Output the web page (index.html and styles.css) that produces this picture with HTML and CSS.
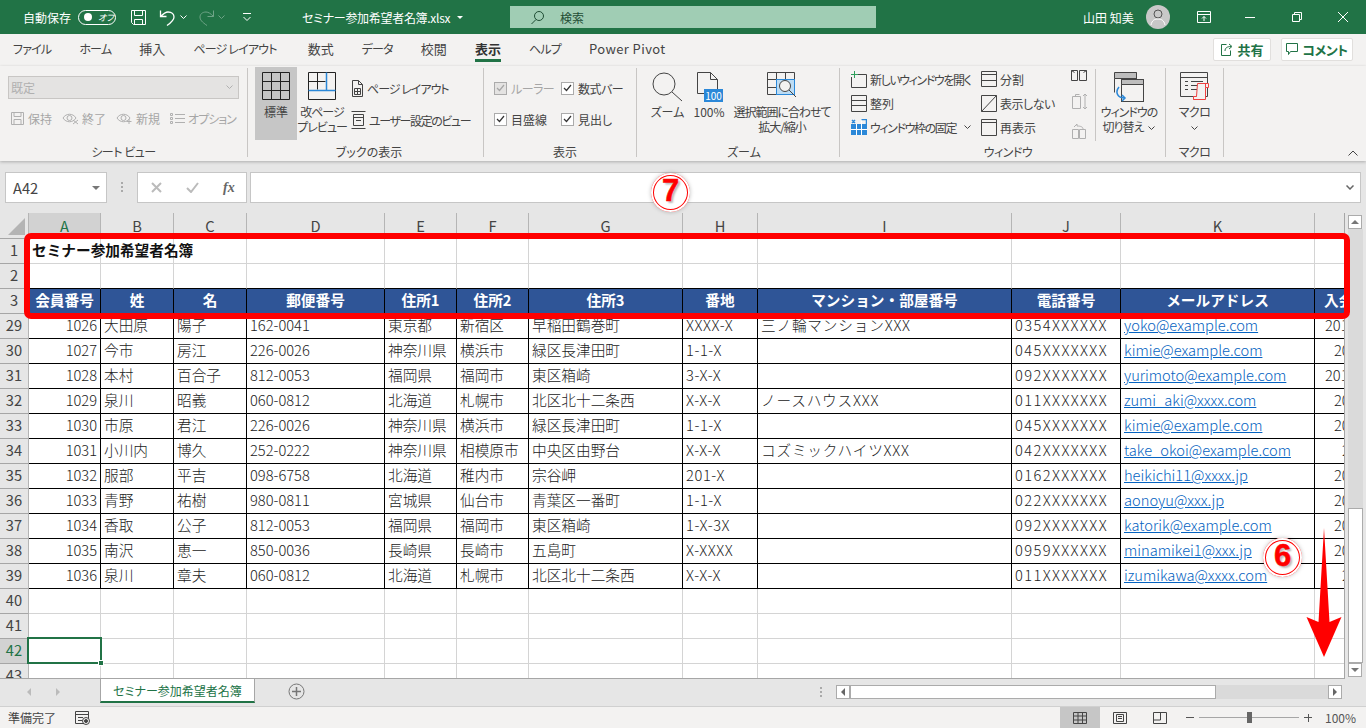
FILE: index.html
```html
<!DOCTYPE html>
<html lang="ja">
<head>
    <meta charset="utf-8">
    <title>セミナー参加希望者名簿.xlsx</title>
    <link rel="stylesheet" href="styles.css">
</head>
<body>
<div class="app">
    <!-- タイトルバー -->
    <header class="titlebar">
        <span class="autosave">自動保存</span>
        <span class="toggle"><i></i><em>オフ</em></span>
        <svg class="qa save" width="17" height="17" viewBox="0 0 17 17"><path d="M1.500 1.500h14v14h-12l-2-2zM4.500 1.500v5h8v-5M4.500 15.500v-5h8v5"/></svg>
        <svg class="qa undo" width="17" height="17" viewBox="0 0 17 17"><path d="M1.500 1.500v6h6M1.500 7.500c3-3 5-4.500 7.500-4.500 4 0 6 2.500 6 5 0 3-2 5-7 8.500"/></svg>
        <svg class="qa-chev" width="7" height="5" viewBox="0 0 7 5"><path d="M.5.500l3 3 3-3"/></svg>
        <svg class="qa redo" width="17" height="17" viewBox="0 0 17 17"><path d="M15.500 1.500v6h-6M15.500 7.500c-3-3-5-4.500-7.500-4.500-4 0-6 2.500-6 5 0 3 2 5 7 8.500"/></svg>
        <svg class="qa-chev dim" width="7" height="5" viewBox="0 0 7 5"><path d="M.5.500l3 3 3-3"/></svg>
        <svg class="qa-more" width="8" height="8" viewBox="0 0 8 8"><path d="M0 .5h8M.5 4l3.500 3.500L7.500 4"/></svg>
        <span class="doc-name">セミナー参加希望者名簿.xlsx</span>
        <span class="doc-caret"></span>
        <div class="search">
            <svg width="15" height="15" viewBox="0 0 15 15"><circle cx="9" cy="6" r="4.500"/><path d="M6 9.500L1.500 14"/></svg>
            <span>検索</span>
        </div>
        <span class="user">山田 知美</span>
        <svg class="avatar" width="24" height="24" viewBox="0 0 24 24"><circle cx="12" cy="12" r="12" fill="#c8c8c8"/><circle cx="12" cy="9" r="4" fill="none" stroke="#555"/><path d="M5 20c1-5 4-6 7-6s6 1 7 6" fill="none" stroke="#555"/></svg>
        <svg class="win w1" width="14" height="14" viewBox="0 0 14 14"><path d="M.5 1.500h13v11H.5zM.5 4.500h13M7 11V6.500M5 8.500l2-2 2 2"/></svg>
        <svg class="win w2" width="12" height="12" viewBox="0 0 12 12"><path d="M1 6.500h10"/></svg>
        <svg class="win w3" width="12" height="12" viewBox="0 0 12 12"><path d="M1.500 3.500h7v7h-7zM3.500 3.500v-2h7v7h-2"/></svg>
        <svg class="win w4" width="12" height="12" viewBox="0 0 12 12"><path d="M1 1l10 10M11 1L1 11"/></svg>
    </header>

    <!-- リボンのタブ -->
    <nav class="tabs">
        <span class="kana">ファイル</span>
        <span class="kana">ホーム</span>
        <span>挿入</span>
        <span class="kana page-tab">ページ レイアウト</span>
        <span>数式</span>
        <span class="kana">データ</span>
        <span>校閲</span>
        <span class="active">表示</span>
        <span class="kana">ヘルプ</span>
        <span class="latin">Power Pivot</span>
        <div class="share-btns">
            <button class="share"><svg width="13" height="14" viewBox="0 0 13 14"><path d="M6.500 2.500H1.500v11h9v-5M5 9c0-3 2-4.500 6-4.500M9 2l3 2.500L9 7"/></svg>共有</button>
            <button class="comment"><svg width="12" height="13" viewBox="0 0 12 13"><path d="M.5.500h11v8h-7l-2 3v-3h-2z"/></svg><span class="tight">コメント</span></button>
        </div>
    </nav>

    <!-- リボン -->
    <div class="ribbon">
        <section class="group g-sheet">
            <div class="group-body">
                <div class="sheet-view">
                    <div class="view-select"><span>既定</span><svg width="7" height="5" viewBox="0 0 7 5"><path d="M.5.500l3 3 3-3"/></svg></div>
                    <div class="view-actions">
                        <span><svg class="ic off" width="15" height="15" viewBox="0 0 15 15"><path d="M1.500 1.500h12v12h-12zM4 1.500v4h7v-4M4 13.500v-5h7v5"/></svg>保持</span>
                        <span><svg class="ic off" width="17" height="13" viewBox="0 0 17 13"><path d="M1 6c3-5 10-5 13 0-3 5-10 5-13 0z"/><circle cx="7.500" cy="6" r="2.500"/><path d="M11 8l5 4M16 8l-5 4"/></svg>終了</span>
                        <span><svg class="ic off" width="17" height="13" viewBox="0 0 17 13"><path d="M1 6c3-5 10-5 13 0-3 5-10 5-13 0z"/><circle cx="7.500" cy="6" r="2.500"/><path d="M13 7v5M10.500 9.500h5"/></svg>新規</span>
                        <span><svg class="ic off" width="15" height="13" viewBox="0 0 15 13"><path d="M.5 1.500h2v2h-2zM.5 5.500h2v2h-2zM.5 9.500h2v2h-2zM5 2.500h10M5 6.500h10M5 10.500h10"/></svg><b class="tight">オプション</b></span>
                    </div>
                </div>
            </div>
            <div class="group-label tight-s">シート ビュー</div>
        </section>

        <section class="group g-book">
            <div class="group-body">
                <div class="big on w42">
                    <svg class="ic strong" width="28" height="28" viewBox="0 0 28 28"><path d="M.5.500h27v27H.5zM9.500.500v27M18.500.500v27M.5 9.500h27M.5 18.500h27"/></svg>
                    <span>標準</span>
                </div>
                <div class="big w48">
                    <svg class="ic strong" width="28" height="28" viewBox="0 0 28 28"><path d="M.5.500h27v27H.5zM9.500.500v17M.5 9.500h17"/><path class="blue" d="M.5 18.500h27M18.500.500v18"/></svg>
                    <span class="tight">改ページ<br>プレビュー</span>
                </div>
                <div class="small-col view-links">
                    <div class="item"><svg class="ic" width="13" height="17" viewBox="0 0 13 17"><path d="M1.500.500h6l4 4v12h-10zM7.500.500v4h4M3.500 8.500h6v6h-6zM6.500 8.500v6M3.500 11.500h6"/></svg><span class="tight">ページ レイアウト</span></div>
                    <div class="item"><svg class="ic" width="15" height="18" viewBox="0 0 15 18"><path d="M.5.500h14M.5 17.500h14M2.500 3.500h10v11h-10zM2.500 6.500h10M5 9.500h5"/></svg><span class="tighter">ユーザー設定のビュー</span></div>
                </div>
            </div>
            <div class="group-label">ブックの表示</div>
        </section>

        <section class="group g-show">
            <div class="group-body">
                <div class="checks">
                    <label class="check off"><i><svg width="9" height="8" viewBox="0 0 9 8"><path d="M1 4l2.500 2.500L8 1"/></svg></i><span class="tight-s">ルーラー</span></label>
                    <label class="check"><i><svg width="9" height="8" viewBox="0 0 9 8"><path d="M1 4l2.500 2.500L8 1"/></svg></i><span class="tight-s">数式バー</span></label>
                    <label class="check"><i><svg width="9" height="8" viewBox="0 0 9 8"><path d="M1 4l2.500 2.500L8 1"/></svg></i>目盛線</label>
                    <label class="check"><i><svg width="9" height="8" viewBox="0 0 9 8"><path d="M1 4l2.500 2.500L8 1"/></svg></i>見出し</label>
                </div>
            </div>
            <div class="group-label">表示</div>
        </section>

        <section class="group g-zoom">
            <div class="group-body">
                <div class="big w37 tall">
                    <svg class="ic" width="32" height="30" viewBox="0 0 32 30"><circle cx="12" cy="12" r="11"/><path d="M20 20l10 9"/></svg>
                    <span>ズーム</span>
                </div>
                <div class="big w46 tall">
                    <svg class="ic" width="28" height="30" viewBox="0 0 28 30"><path d="M9 21.500H2.500V.500h13l7 7v10M15.500.500v7h7"/><rect x="9" y="17" width="19" height="13" fill="#2b88d8" stroke="none"/><text x="18.500" y="27.500" class="pct">100</text></svg>
                    <span>100%</span>
                </div>
                <div class="big w100 mid">
                    <svg class="ic" width="31" height="29" viewBox="0 0 31 29"><path d="M.5.500h27v22H.5zM9.500.500v22M18.500.500v22M.5 7.500h27M.5 15.500h27"/><rect x="9.500" y="7.500" width="18" height="15" fill="#bcdcf4" stroke="#2b88d8"/><circle cx="18" cy="14" r="5.500" fill="#f3f2f1"/><path d="M22 18l7 7"/></svg>
                    <span class="tight">選択範囲に合わせて<br>拡大/縮小</span>
                </div>
            </div>
            <div class="group-label">ズーム</div>
        </section>

        <section class="group g-window">
            <div class="group-body">
                <div class="win-col w130">
                    <div class="item"><svg class="ic" width="16" height="17" viewBox="0 0 16 17"><path d="M5 3.500h10.500v13H.5V6"/><path class="green" d="M3.500 0v7M0 3.500h7"/></svg><span class="tighter">新しいウィンドウを開く</span></div>
                    <div class="item"><svg class="ic" width="16" height="17" viewBox="0 0 16 17"><path d="M.5.500h15v16H.5zM.5 5.500h15M.5 10.500h15"/></svg>整列</div>
                    <div class="item"><svg class="ic" width="16" height="16" viewBox="0 0 16 16"><rect y="5" width="16" height="11" fill="#2b88d8" stroke="none"/><path class="white" d="M5.500 5v11M10.500 1v15M0 10.500h16"/><path class="blue" d="M10.500.500h5v5M1 1l3 3M4 1L1 4"/></svg><span class="tighter">ウィンドウ枠の固定</span><svg class="chev" width="7" height="5" viewBox="0 0 7 5"><path d="M.5.500l3 3 3-3"/></svg></div>
                </div>
                <div class="win-col w80">
                    <div class="item"><svg class="ic" width="16" height="16" viewBox="0 0 16 16"><path d="M.5.500h15v15H.5zM.5 3.500h15M.5 9.500h15"/></svg>分割</div>
                    <div class="item"><svg class="ic" width="16" height="17" viewBox="0 0 16 17"><path d="M.5.500h15v16H.5zM.5 16.500l15-16"/></svg><span class="tight-s">表示しない</span></div>
                    <div class="item"><svg class="ic" width="16" height="17" viewBox="0 0 16 17"><path d="M.5.500h15v16H.5zM.5 3.500h15"/></svg>再表示</div>
                </div>
                <div class="mini-col">
                    <svg class="ic" width="16" height="12" viewBox="0 0 16 12"><path d="M.5 1.500h6v10h-6zM8.500 1.500h7v10h-7zM.5 1.500l3 2M15.500 1.500l-3 2"/></svg>
                    <svg class="ic off" width="17" height="17" viewBox="0 0 17 17"><path d="M1.500 3.500h8v12h-8zM4.500 3.500v-2h4M14 1v15M12 3l2-2 2 2M12 14l2 2 2-2"/></svg>
                    <svg class="ic off" width="16" height="17" viewBox="0 0 16 17"><path d="M1.500 7.500h6v9h-6zM8.500 7.500h6v9h-6zM3 5l3-3v2c4 0 6 1 6 3"/></svg>
                </div>
                <div class="big switch tall">
                    <svg class="ic" width="30" height="30" viewBox="0 0 30 30"><path d="M.5.500h22v6H.5z" fill="#bdbdbd"/><path d="M.5 6.500v14M22.500.500v7"/><rect x="7.500" y="7.500" width="22" height="22" fill="#f3f2f1"/><path d="M7.500 7.500h22v5h-22z" fill="#bdbdbd"/><path class="blue" d="M5 15c-4 5-2 11 6 11M8 23l3 3-3 3"/></svg>
                    <span class="tight">ウィンドウの<br>切り替え<svg class="chev" width="7" height="5" viewBox="0 0 7 5"><path d="M.5.500l3 3 3-3"/></svg></span>
                </div>
            </div>
            <div class="group-label tight-s">ウィンドウ</div>
        </section>

        <section class="group g-macro">
            <div class="group-body">
                <div class="big w57 mid">
                    <svg class="ic" width="30" height="29" viewBox="0 0 30 29"><path d="M.5.500h27v24H.5zM.5 5.500h27M5 9.500h3M11 9.500h12M5 13.500h3M11 13.500h9M5 17.500h3M11 17.500h6"/><path class="red" d="M17.500 11.500h11v4h-3v12h-12v-3h3zM25.500 11.500v4M13.500 27.500v-3"/></svg>
                    <span class="tight-s">マクロ<br><svg class="chev none" width="7" height="5" viewBox="0 0 7 5"><path d="M.5.500l3 3 3-3"/></svg></span>
                </div>
            </div>
            <div class="group-label tight-s">マクロ</div>
        </section>
        <svg class="collapse" width="10" height="6" viewBox="0 0 10 6"><path d="M.5 5.500l4.500-4.500 4.500 4.500"/></svg>
    </div>

    <!-- 数式バー -->
    <div class="formula">
        <div class="name-box"><span>A42</span><i></i></div>
        <div class="formula-dots"></div>
        <div class="fx-box">
            <svg width="11" height="11" viewBox="0 0 11 11"><path d="M1 1l9 9M10 1L1 10"/></svg>
            <svg width="13" height="11" viewBox="0 0 13 11"><path d="M1 6l4 4 7-9"/></svg>
            <span>fx</span>
        </div>
        <div class="formula-input"><svg width="8" height="5" viewBox="0 0 8 5"><path d="M.5.500l3.500 3.500L7.500.500"/></svg></div>
    </div>

    <!-- シート -->
    <div class="sheet-area">
        <div class="sheet">
            <table class="grid">
                <colgroup>
                    <col class="c-rh"><col class="c-a"><col class="c-b"><col class="c-c"><col class="c-d"><col class="c-e"><col class="c-f"><col class="c-g"><col class="c-h"><col class="c-i"><col class="c-j"><col class="c-k"><col class="c-l">
                </colgroup>
                <tr class="cols">
                    <th class="corner"><i></i></th><th class="sel">A</th><th>B</th><th>C</th><th>D</th><th>E</th><th>F</th><th>G</th><th>H</th><th>I</th><th>J</th><th>K</th><th></th>
                </tr>
                <tr><th class="rh">1</th><td class="title">セミナー参加希望者名簿</td><td></td><td></td><td></td><td></td><td></td><td></td><td></td><td></td><td></td><td></td><td></td></tr>
                <tr class="above-head"><th class="rh">2</th><td></td><td></td><td></td><td></td><td></td><td></td><td></td><td></td><td></td><td></td><td></td><td></td></tr>
                <tr class="head"><th class="rh">3</th><td>会員番号</td><td>姓</td><td>名</td><td>郵便番号</td><td>住所1</td><td>住所2</td><td>住所3</td><td>番地</td><td>マンション・部屋番号</td><td>電話番号</td><td>メールアドレス</td><td class="date d1">入会</td></tr>
                <tr class="rec"><th class="rh">29</th><td class="num">1026</td><td>大田原</td><td>陽子</td><td>162-0041</td><td>東京都</td><td>新宿区</td><td>早稲田鶴巻町</td><td>XXXX-X</td><td>三ノ輪マンションXXX</td><td>0354XXXXXX</td><td class="mail"><a>yoko@example.com</a></td><td class="date d2">201</td></tr>
                <tr class="rec"><th class="rh">30</th><td class="num">1027</td><td>今市</td><td>房江</td><td>226-0026</td><td>神奈川県</td><td>横浜市</td><td>緑区長津田町</td><td>1-1-X</td><td></td><td>045XXXXXXX</td><td class="mail"><a>kimie@example.com</a></td><td class="date d3">20</td></tr>
                <tr class="rec"><th class="rh">31</th><td class="num">1028</td><td>本村</td><td>百合子</td><td>812-0053</td><td>福岡県</td><td>福岡市</td><td>東区箱崎</td><td>3-X-X</td><td></td><td>092XXXXXXX</td><td class="mail"><a>yurimoto@example.com</a></td><td class="date d2">201</td></tr>
                <tr class="rec"><th class="rh">32</th><td class="num">1029</td><td>泉川</td><td>昭義</td><td>060-0812</td><td>北海道</td><td>札幌市</td><td>北区北十二条西</td><td>X-X-X</td><td>ノースハウスXXX</td><td>011XXXXXXX</td><td class="mail"><a>zumi_aki@xxxx.com</a></td><td class="date d3">20</td></tr>
                <tr class="rec"><th class="rh">33</th><td class="num">1030</td><td>市原</td><td>君江</td><td>226-0026</td><td>神奈川県</td><td>横浜市</td><td>緑区長津田町</td><td>1-1-X</td><td></td><td>045XXXXXXX</td><td class="mail"><a>kimie@example.com</a></td><td class="date d3">20</td></tr>
                <tr class="rec"><th class="rh">34</th><td class="num">1031</td><td>小川内</td><td>博久</td><td>252-0222</td><td>神奈川県</td><td>相模原市</td><td>中央区由野台</td><td>X-X-X</td><td>コズミックハイツXXX</td><td>042XXXXXXX</td><td class="mail"><a>take_okoi@example.com</a></td><td class="date d4">2</td></tr>
                <tr class="rec"><th class="rh">35</th><td class="num">1032</td><td>服部</td><td>平吉</td><td>098-6758</td><td>北海道</td><td>稚内市</td><td>宗谷岬</td><td>201-X</td><td></td><td>0162XXXXXX</td><td class="mail"><a>heikichi11@xxxx.jp</a></td><td class="date d3">20</td></tr>
                <tr class="rec"><th class="rh">36</th><td class="num">1033</td><td>青野</td><td>祐樹</td><td>980-0811</td><td>宮城県</td><td>仙台市</td><td>青葉区一番町</td><td>1-1-X</td><td></td><td>022XXXXXXX</td><td class="mail"><a>aonoyu@xxx.jp</a></td><td class="date d3">20</td></tr>
                <tr class="rec"><th class="rh">37</th><td class="num">1034</td><td>香取</td><td>公子</td><td>812-0053</td><td>福岡県</td><td>福岡市</td><td>東区箱崎</td><td>1-X-3X</td><td></td><td>092XXXXXXX</td><td class="mail"><a>katorik@example.com</a></td><td class="date d3">20</td></tr>
                <tr class="rec"><th class="rh">38</th><td class="num">1035</td><td>南沢</td><td>恵一</td><td>850-0036</td><td>長崎県</td><td>長崎市</td><td>五島町</td><td>X-XXXX</td><td></td><td>0959XXXXXX</td><td class="mail"><a>minamikei1@xxx.jp</a></td><td class="date d3">20</td></tr>
                <tr class="rec"><th class="rh">39</th><td class="num">1036</td><td>泉川</td><td>章夫</td><td>060-0812</td><td>北海道</td><td>札幌市</td><td>北区北十二条西</td><td>X-X-X</td><td></td><td>011XXXXXXX</td><td class="mail"><a>izumikawa@xxxx.com</a></td><td class="date d4">2</td></tr>
                <tr><th class="rh">40</th><td></td><td></td><td></td><td></td><td></td><td></td><td></td><td></td><td></td><td></td><td></td><td></td></tr>
                <tr><th class="rh">41</th><td></td><td></td><td></td><td></td><td></td><td></td><td></td><td></td><td></td><td></td><td></td><td></td></tr>
                <tr><th class="rh sel">42</th><td></td><td></td><td></td><td></td><td></td><td></td><td></td><td></td><td></td><td></td><td></td><td></td></tr>
                <tr><th class="rh">43</th><td></td><td></td><td></td><td></td><td></td><td></td><td></td><td></td><td></td><td></td><td></td><td></td></tr>
            </table>
            <div class="cell-cursor"><i></i></div>
        </div>
        <div class="vscroll">
            <div class="sb-btn"><i class="tri-up"></i></div>
            <div class="vtrack"><div class="vthumb"></div></div>
            <div class="sb-btn"><i class="tri-down"></i></div>
        </div>
    </div>

    <!-- シート見出し -->
    <div class="sheetbar">
        <div class="sheet-nav"><i class="tri-left"></i><i class="tri-right"></i></div>
        <div class="sheet-tab">セミナー参加希望者名簿</div>
        <svg class="add-sheet" width="17" height="17" viewBox="0 0 17 17"><circle cx="8.500" cy="8.500" r="7.500"/><path d="M8.500 4v9M4 8.500h9"/></svg>
        <div class="bar-dots"></div>
        <div class="hscroll">
            <div class="sb-btn"><i class="tri-left dark"></i></div>
            <div class="htrack"><div class="hthumb"></div></div>
            <div class="sb-btn"><i class="tri-right dark"></i></div>
        </div>
    </div>

    <!-- ステータスバー -->
    <footer class="status">
        <span class="ready">準備完了</span>
        <svg class="ic macro-rec" width="15" height="14" viewBox="0 0 15 14"><path d="M9 12.500H.5V.500h13v7M.5 3.500h13M3 6.500h5M3 9.500h4"/><circle cx="11" cy="10" r="3.500"/><circle cx="11" cy="10" r="1.500" fill="#444"/></svg>
        <div class="views">
            <span class="view on"><svg class="ic" width="14" height="12" viewBox="0 0 14 12"><path d="M.5.500h13v11H.5zM5 .5v11M9.500.5v11M.5 4h13M.5 8h13"/></svg></span>
            <span class="view"><svg class="ic" width="14" height="12" viewBox="0 0 14 12"><path d="M.5.500h13v11H.5zM3.500 2.500h7v7h-7zM5 4.500h4M5 6.500h4"/></svg></span>
            <span class="view"><svg class="ic" width="14" height="12" viewBox="0 0 14 12"><path d="M.5.500h13v11H.5zM.5 8h7V.500"/></svg></span>
        </div>
        <div class="zoom-ctl">
            <span class="minus"></span>
            <span class="slider"><i></i></span>
            <span class="plus"></span>
        </div>
        <span class="pct-label">100%</span>
    </footer>

    <!-- 注釈 -->
    <div class="red-frame"></div>
    <div class="badge b7">7</div>
    <div class="badge b6">6</div>
    <svg class="red-arrow" width="38" height="131" viewBox="0 0 38 131"><path d="M19 1l5.500 94 12-5-17.500 40L1.500 90l12 5z"/></svg>
</div>
</body>
</html>
```

FILE: styles.css
```css
* {
    box-sizing: border-box;
}
html, body {
    margin: 0;
    height: 100%;
    overflow: hidden;
}
body {
    font-family: "Noto Sans CJK JP", "Noto Sans", sans-serif;
    color: #444;
    font-size: 12px;
}
.app {
    width: 1366px;
    height: 728px;
    display: flex;
    flex-direction: column;
    position: relative;
    overflow: hidden;
    background: #e6e6e6;
    font-feature-settings: "palt";
}
svg {
    flex: none;
}
.tighter {
    letter-spacing: -1.400px;
}
.tight {
    letter-spacing: -1px;
    font-weight: 400;
}
.tight-s {
    letter-spacing: -.5px;
}

/* title bar */
.titlebar {
    height: 34px;
    background: #217346;
    color: #fff;
    display: flex;
    align-items: center;
    padding-left: 23px;
}
.titlebar svg path {
    fill: none;
    stroke: #fff;
}
.autosave {
    width: 49px;
    white-space: nowrap;
}
.toggle {
    width: 38px;
    height: 15px;
    margin-left: 6px;
    border: 1px solid #fff;
    border-radius: 8px;
    display: flex;
    align-items: center;
    padding-left: 5px;
}
.toggle i {
    width: 8px;
    height: 8px;
    background: #fff;
    border-radius: 50%;
}
.toggle em {
    font-size: 9px;
    margin-left: 6px;
    white-space: nowrap;
}
.qa.save {
    margin-left: 14px;
}
.qa.undo {
    margin-left: 12px;
}
.qa.undo path {
    stroke-width: 1.300;
}
.qa-chev {
    margin-left: 4px;
}
.qa.redo {
    margin-left: 11px;
    opacity: .35;
}
.qa-chev.dim {
    margin-left: 3px;
    opacity: .35;
}
.qa-more {
    margin-left: 18px;
}
.doc-name {
    margin-left: 51px;
    width: 149px;
    white-space: nowrap;
    letter-spacing: -.3px;
}
.doc-caret {
    margin-left: 6px;
    border-left: 3px solid transparent;
    border-right: 3px solid transparent;
    border-top: 3px solid #fff;
}
.search {
    margin-left: 47px;
    width: 366px;
    height: 22px;
    background: #a0cdb4;
    display: flex;
    align-items: center;
    color: #1f4d34;
    padding-left: 20px;
}
.titlebar .search svg circle,
.titlebar .search svg path {
    fill: none;
    stroke: #1f4d34;
}
.search span {
    margin-left: 15px;
}
.user {
    margin-left: 207px;
    width: 52px;
    white-space: nowrap;
}
.avatar {
    margin-left: 11px;
}
.win.w1 {
    margin-left: 27px;
}
.win.w2 {
    margin-left: 33px;
}
.win.w3 {
    margin-left: 35px;
}
.win.w4 {
    margin-left: 34px;
}

/* ribbon tabs */
.tabs {
    height: 32px;
    background: #f3f2f1;
    display: flex;
    align-items: center;
    padding-left: 13px;
    gap: 28px;
    white-space: nowrap;
}
.tabs > span {
    font-size: 13px;
    line-height: 30px;
    position: relative;
    margin-top: -2px;
}
.tabs > .kana {
    font-size: 12px;
    letter-spacing: -.8px;
}
.tabs > .page-tab {
    margin-right: 3px;
}
.tabs > .latin {
    letter-spacing: .4px;
}
.tabs .active {
    font-weight: 700;
    color: #333;
}
.tabs .active::after {
    content: "";
    position: absolute;
    left: 0;
    right: 0;
    bottom: 2px;
    height: 3px;
    background: #217346;
}
.share-btns {
    margin-left: auto;
    margin-right: 13px;
    display: flex;
    gap: 10px;
    margin-top: -2px;
}
.share-btns button {
    height: 23px;
    background: #fff;
    border: 1px solid #e1dfdd;
    border-radius: 2px;
    font: 700 13px "Noto Sans CJK JP", sans-serif;
    font-feature-settings: "palt";
    color: #217346;
    display: flex;
    align-items: center;
    justify-content: center;
    gap: 4px;
    padding: 0;
}
.share-btns .tight {
    font-weight: 700;
    letter-spacing: -.5px;
}
.share-btns svg path {
    fill: none;
    stroke: #217346;
}
.share {
    width: 58px;
}
.comment {
    width: 72px;
}

/* ribbon */
.ribbon {
    height: 95px;
    background: #f3f2f1;
    display: flex;
    align-items: flex-start;
    padding-top: 2px;
    box-shadow: 0 1px 3px rgba(0, 0, 0, .25);
    position: relative;
    z-index: 1;
    flex: none;
}
.group {
    height: 89px;
    border-right: 1px solid #c8c6c4;
    display: flex;
    flex-direction: column;
    flex: none;
}
.group-body {
    flex: 1;
    display: flex;
    min-height: 0;
}
.group-label {
    height: 14px;
    line-height: 18px;
    text-align: center;
    white-space: nowrap;
}
.g-sheet { width: 248px; }
.g-book { width: 236px; padding-left: 7px; }
.g-show { width: 153px; padding-left: 10px; }
.g-zoom { width: 203px; padding-left: 12px; }
.g-window { width: 326px; padding-left: 11px; }
.g-macro { width: 58px; }

.ic {
    fill: none;
    stroke: #444;
}
.ic.off {
    stroke: #b0b0b0;
}
.ic.strong {
    stroke: #222;
}
.ic .blue {
    stroke: #2b88d8;
    stroke-width: 1.500;
}
.ic .green {
    stroke: #2e9e5b;
}
.ic .red {
    stroke: #ee4040;
    fill: #f3f2f1;
}
.ic .white {
    stroke: #fff;
}
.ic .pct {
    fill: #fff;
    stroke: none;
    font-size: 10px;
    text-anchor: middle;
}
.chev {
    margin-left: 5px;
    vertical-align: middle;
    fill: none;
    stroke: #444;
}
.chev.none {
    margin-left: 0;
}

.sheet-view {
    padding: 8px 0 0 8px;
}
.view-select {
    width: 231px;
    height: 23px;
    background: #e4e3e2;
    border: 1px solid #c8c6c4;
    color: #b0b0b0;
    display: flex;
    align-items: center;
    justify-content: space-between;
    padding: 0 5px 0 2px;
}
.view-select svg path {
    fill: none;
    stroke: #b0b0b0;
}
.view-actions {
    display: flex;
    margin: 11px 0 0 2px;
    color: #a6a6a6;
    white-space: nowrap;
}
.view-actions span {
    display: flex;
    align-items: center;
    gap: 3px;
    margin-right: 10px;
}

.big {
    display: flex;
    flex-direction: column;
    align-items: center;
    padding-top: 4px;
    line-height: 15px;
    text-align: center;
    white-space: nowrap;
    height: 73px;
}
.big > svg {
    margin-bottom: 4px;
}
.big.tall > svg {
    margin-bottom: 2px;
}
.big.mid > svg {
    margin-bottom: 3px;
}
.big.on {
    background: #c6c6c6;
    margin-top: -1px;
    padding-top: 5px;
}
.w37 { width: 37px; }
.w42 { width: 42px; }
.w46 { width: 46px; }
.w48 { width: 48px; margin-left: 1px; }
.w57 { width: 57px; }
.w100 { width: 100px; }
.w80 { width: 90px; }
.w130 { width: 130px; }

.small-col {
    margin-left: 5px;
    padding-top: 10px;
    display: flex;
    flex-direction: column;
    gap: 12px;
}
.item {
    height: 20px;
    display: flex;
    align-items: center;
    gap: 3px;
    white-space: nowrap;
}
.checks {
    display: grid;
    grid-template-columns: 67px auto;
    row-gap: 11px;
    padding-top: 10px;
    white-space: nowrap;
    align-content: start;
}
.check {
    height: 20px;
    display: flex;
    align-items: center;
    gap: 4px;
}
.check i {
    width: 13px;
    height: 13px;
    background: #fff;
    border: 1px solid #ababab;
    display: flex;
    align-items: center;
    justify-content: center;
}
.check svg path {
    fill: none;
    stroke: #333;
    stroke-width: 1.200;
}
.check.off {
    color: #a6a6a6;
}
.check.off i {
    background: #e4e3e2;
}
.check.off svg path {
    stroke: #a6a6a6;
}
.win-col {
    display: flex;
    flex-direction: column;
    gap: 4px;
    padding-top: 1px;
}
.mini-col {
    width: 25px;
    height: 72px;
    border-right: 1px solid #c8c6c4;
    display: flex;
    flex-direction: column;
    justify-content: space-between;
    padding: 0 0 2px 0;
    margin-top: 1px;
}
.switch {
    width: 60px;
    margin-left: 3px;
}
.collapse {
    position: absolute;
    right: 8px;
    bottom: 5px;
    fill: none;
    stroke: #444;
}

/* formula bar */
.formula {
    height: 52px;
    flex: none;
    display: flex;
    align-items: flex-start;
    padding: 11px 5px 0;
    background: #e6e6e6;
}
.name-box,
.fx-box,
.formula-input {
    height: 31px;
    background: #fff;
    border: 1px solid #c6c6c6;
}
.name-box {
    width: 102px;
    display: flex;
    align-items: center;
    justify-content: space-between;
    padding: 0 6px 0 7px;
    font-size: 14.670px;
    font-feature-settings: normal;
}
.name-box i {
    border-left: 4px solid transparent;
    border-right: 4px solid transparent;
    border-top: 4px solid #777;
}
.formula-dots {
    width: 2px;
    height: 10px;
    margin: 10px 14px 0 14px;
    background: repeating-linear-gradient(#aaa 0 2px, transparent 2px 4px);
}
.fx-box {
    width: 110px;
    display: flex;
    align-items: center;
    gap: 24px;
    padding-left: 13px;
}
.fx-box svg path {
    fill: none;
    stroke: #bbb;
    stroke-width: 2;
}
.fx-box span {
    font: italic 700 14px "Liberation Serif", serif;
    color: #666;
}
.formula-input {
    margin-left: 3px;
    width: 1111px;
    display: flex;
    align-items: center;
    justify-content: flex-end;
    padding-right: 6px;
}
.formula-input svg path {
    fill: none;
    stroke: #666;
    stroke-width: 1.500;
}

/* sheet */
.sheet-area {
    height: 466px;
    flex: none;
    display: flex;
    background: #e6e6e6;
}
.sheet {
    width: 1345px;
    height: 466px;
    overflow: hidden;
    background: #fff;
    position: relative;
    border-right: 1px solid #a6a6a6;
    border-bottom: 1px solid #a6a6a6;
}
.grid {
    width: 1415px;
    table-layout: fixed;
    border-collapse: separate;
    border-spacing: 0;
    font-size: 14.670px;
    font-feature-settings: normal;
}
.c-rh { width: 29px; }
.c-a { width: 72px; }
.c-b { width: 73px; }
.c-c { width: 73px; }
.c-d { width: 138px; }
.c-e { width: 72px; }
.c-f { width: 72px; }
.c-g { width: 154px; }
.c-h { width: 75px; }
.c-i { width: 254px; }
.c-j { width: 109px; }
.c-k { width: 194px; }
.c-l { width: 100px; }
.grid tr {
    height: 25px;
}
.grid th,
.grid td {
    height: 25px;
    padding: 0;
    font-weight: 400;
    white-space: nowrap;
    overflow: hidden;
    line-height: 22px;
    vertical-align: top;
}
.grid td {
    padding: 0 3px;
    color: #222;
    font-weight: 300;
    border-right: 1px solid #d4d4d4;
    border-bottom: 1px solid #d4d4d4;
}
.grid th {
    background: #e6e6e6;
    border-right: 1px solid #b5b5b5;
    border-bottom: 1px solid #a6a6a6;
    color: #444;
    text-align: center;
}
.grid .cols,
.grid .cols th {
    height: 26px;
}
.grid .cols th {
    padding-top: 2px;
}
.grid th.sel {
    background: #d2d2d2;
    color: #217346;
}
.corner {
    position: relative;
}
.corner i {
    position: absolute;
    right: 3px;
    bottom: 3px;
    border-left: 17px solid transparent;
    border-bottom: 17px solid #b4b4b4;
}
.grid .title {
    overflow: visible;
    font-weight: 700;
    color: #111;
}
.grid .above-head td {
    border-bottom-color: #000;
}
.grid .head td {
    background: #2f5597;
    color: #fff;
    font-weight: 700;
    text-align: center;
    border-color: #000;
}
.grid .rec td {
    border-color: #000;
}
.grid .rec td:nth-child(9) {
    letter-spacing: .6px;
}
.grid .rec td:nth-child(10) {
    letter-spacing: .8px;
}
.grid .rec td:nth-child(11) {
    letter-spacing: 1.400px;
}
.grid .num {
    text-align: right;
}
.grid .mail a {
    color: #0563c1;
    text-decoration: underline;
}
.grid td.date,
.grid .head td.date {
    text-align: left;
}
.grid td.d1 { padding-left: 9px; }
.grid td.d2 { padding-left: 10px; }
.grid td.d3 { padding-left: 19px; }
.grid td.d4 { padding-left: 27px; }
.cell-cursor {
    position: absolute;
    left: 27px;
    top: 424px;
    width: 75px;
    height: 27px;
    border: 2px solid #217346;
}
.cell-cursor i {
    position: absolute;
    right: -4px;
    bottom: -4px;
    background: #217346;
    border: 1px solid #fff;
    box-sizing: content-box;
    width: 4px;
    height: 4px;
}

/* scrollbars */
.vscroll {
    width: 21px;
    padding: 2px 3px 2px 3px;
    display: flex;
    flex-direction: column;
}
.sb-btn {
    width: 14px;
    height: 14px;
    background: #fff;
    border: 1px solid #ababab;
    display: flex;
    align-items: center;
    justify-content: center;
    flex: none;
}
.vtrack {
    flex: 1;
    background: #dadada;
    display: flex;
    flex-direction: column;
    justify-content: flex-end;
}
.vthumb {
    height: 155px;
    background: #fff;
    border: 1px solid #ababab;
}
.tri-up {
    border-left: 4px solid transparent;
    border-right: 4px solid transparent;
    border-bottom: 4px solid #777;
}
.tri-down {
    border-left: 4px solid transparent;
    border-right: 4px solid transparent;
    border-top: 4px solid #777;
}
.tri-left {
    border-top: 4px solid transparent;
    border-bottom: 4px solid transparent;
    border-right: 4px solid #bbb;
}
.tri-right {
    border-top: 4px solid transparent;
    border-bottom: 4px solid transparent;
    border-left: 4px solid #bbb;
}
.tri-left.dark {
    border-right-color: #666;
}
.tri-right.dark {
    border-left-color: #666;
}

/* sheet tabs */
.sheetbar {
    height: 27px;
    flex: none;
    display: flex;
    align-items: flex-start;
    background: #e6e6e6;
}
.sheet-nav {
    width: 100px;
    display: flex;
    gap: 25px;
    padding: 9px 0 0 27px;
}
.sheet-tab {
    width: 155px;
    height: 25px;
    margin-top: -1px;
    background: #fff;
    border: 1px solid #a6a6a6;
    border-top: 0;
    border-bottom: 2px solid #217346;
    color: #217346;
    text-align: center;
    line-height: 25px;
    white-space: nowrap;
}
.add-sheet {
    margin: 4px 0 0 33px;
    fill: none;
    stroke: #777;
}
.add-sheet path {
    stroke-width: 1.500;
}
.bar-dots {
    width: 2px;
    height: 10px;
    margin: 8px 14px 0 515px;
    background: repeating-linear-gradient(#aaa 0 2px, transparent 2px 4px);
}
.hscroll {
    width: 506px;
    margin-top: 6px;
    display: flex;
}
.htrack {
    flex: 1;
    background: #dadada;
}
.hthumb {
    width: 366px;
    height: 14px;
    background: #fff;
    border: 1px solid #ababab;
}

/* status bar */
.status {
    height: 22px;
    flex: none;
    background: #f3f2f1;
    display: flex;
    align-items: center;
    padding-left: 8px;
    border-top: 1px solid #d0d0d0;
    white-space: nowrap;
}
.macro-rec {
    margin-left: 19px;
}
.views {
    margin-left: 970px;
    display: flex;
    height: 21px;
}
.view {
    width: 40px;
    display: flex;
    align-items: center;
    justify-content: center;
}
.view.on {
    background: #c6c6c6;
}
.zoom-ctl {
    margin-left: 6px;
    display: flex;
    align-items: center;
    gap: 5px;
}
.minus {
    width: 8px;
    height: 1px;
    background: #555;
}
.slider {
    width: 100px;
    height: 1px;
    background: #a6a6a6;
    position: relative;
}
.slider i {
    position: absolute;
    left: 48px;
    top: -5px;
    width: 5px;
    height: 11px;
    background: #666;
}
.plus {
    width: 8px;
    height: 8px;
    background:
        linear-gradient(#555, #555) center / 100% 1px no-repeat,
        linear-gradient(#555, #555) center / 1px 100% no-repeat;
}
.pct-label {
    margin-left: 13px;
    font-size: 12px;
    color: #555;
}

/* annotations drawn over the screenshot */
.red-frame {
    position: absolute;
    left: 24px;
    top: 233px;
    width: 1326px;
    height: 86px;
    border: 6.500px solid #f00;
    border-radius: 7px;
}
.badge {
    position: absolute;
    width: 39px;
    height: 39px;
    border-radius: 50%;
    background: #fff;
    color: #f00;
    font: 700 31px/35px "Liberation Sans", sans-serif;
    -webkit-text-stroke: .5px #f00;
    text-align: center;
    box-shadow: 0 0 4px rgba(0, 0, 0, .25), inset 0 0 0 2px #fff, inset 0 0 0 3px #f00;
    text-shadow: 2px 2px 2px #bbb;
}
.b7 {
    left: 651px;
    top: 173px;
}
.b6 {
    left: 1263px;
    top: 538px;
}
.red-arrow {
    position: absolute;
    left: 1305px;
    top: 527px;
}
.red-arrow path {
    fill: #f00;
}
```
